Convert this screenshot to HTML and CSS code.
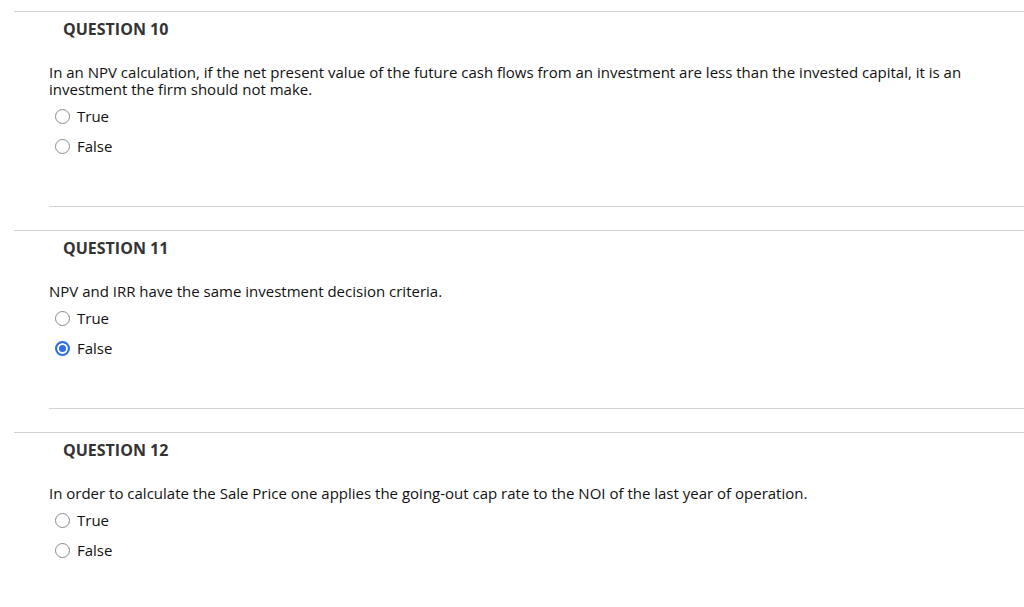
FILE: index.html
```html
<!DOCTYPE html>
<html>
<head>
<meta charset="utf-8">
<link rel="stylesheet" href="styles.css">
</head>
<body>
<div class="page">
  <section class="question">
    <h3 class="q-title">QUESTION 10</h3>
    <div class="q-body">
      <p class="q-text">In an NPV calculation, if the net present value of the future cash flows from an investment are less than the invested capital, it is an investment the firm should not make.</p>
      <ul class="choices">
        <li class="choice"><span class="radio"></span><span class="label">True</span></li>
        <li class="choice"><span class="radio"></span><span class="label">False</span></li>
      </ul>
      <div class="q-footer"></div>
    </div>
  </section>
  <section class="question">
    <h3 class="q-title">QUESTION 11</h3>
    <div class="q-body">
      <p class="q-text">NPV and IRR have the same investment decision criteria.</p>
      <ul class="choices">
        <li class="choice"><span class="radio"></span><span class="label">True</span></li>
        <li class="choice"><span class="radio checked"></span><span class="label">False</span></li>
      </ul>
      <div class="q-footer"></div>
    </div>
  </section>
  <section class="question">
    <h3 class="q-title">QUESTION 12</h3>
    <div class="q-body">
      <p class="q-text">In order to calculate the Sale Price one applies the going-out cap rate to the NOI of the last year of operation.</p>
      <ul class="choices">
        <li class="choice"><span class="radio"></span><span class="label">True</span></li>
        <li class="choice"><span class="radio"></span><span class="label">False</span></li>
      </ul>
    </div>
  </section>
</div>
</body>
</html>
```
FILE: styles.css
```css
html, body {
  margin: 0;
  padding: 0;
  background: #fff;
}
body {
  font-family: "Open Sans", "Liberation Sans", sans-serif;
  color: #222;
}
.page {
  padding: 11px 0 0 14px;
}
.question {
  border-top: 1px solid #d2d2d2;
  padding-top: 6px;
}
.q-title {
  margin: 0 0 0 49px;
  font-size: 16px;
  font-weight: 700;
  line-height: 22px;
  color: #333;
}
.q-body {
  padding-left: 35px;
}
.q-text {
  margin: 24px 0 0 0;
  font-size: 15px;
  line-height: 17px;
  color: #111;
  padding-right: 40px;
}
.choices {
  list-style: none;
  margin: 3px 0 0 0;
  padding: 0;
}
.choice {
  display: flex;
  align-items: center;
  height: 30px;
  font-size: 15px;
  color: #111;
}
.radio {
  box-sizing: border-box;
  width: 15px;
  height: 15px;
  border: 1px solid #8a8a8a;
  border-radius: 50%;
  margin: 0 7px 0 6px;
  background: #fff;
}
.radio.checked {
  border: 2px solid #2d6ee6;
  box-shadow: inset 0 0 0 2px #fff;
  background: #2d6ee6;
}
.q-footer {
  border-top: 1px solid #d2d2d2;
  margin-top: 45px;
  margin-bottom: 23px;
}
```
